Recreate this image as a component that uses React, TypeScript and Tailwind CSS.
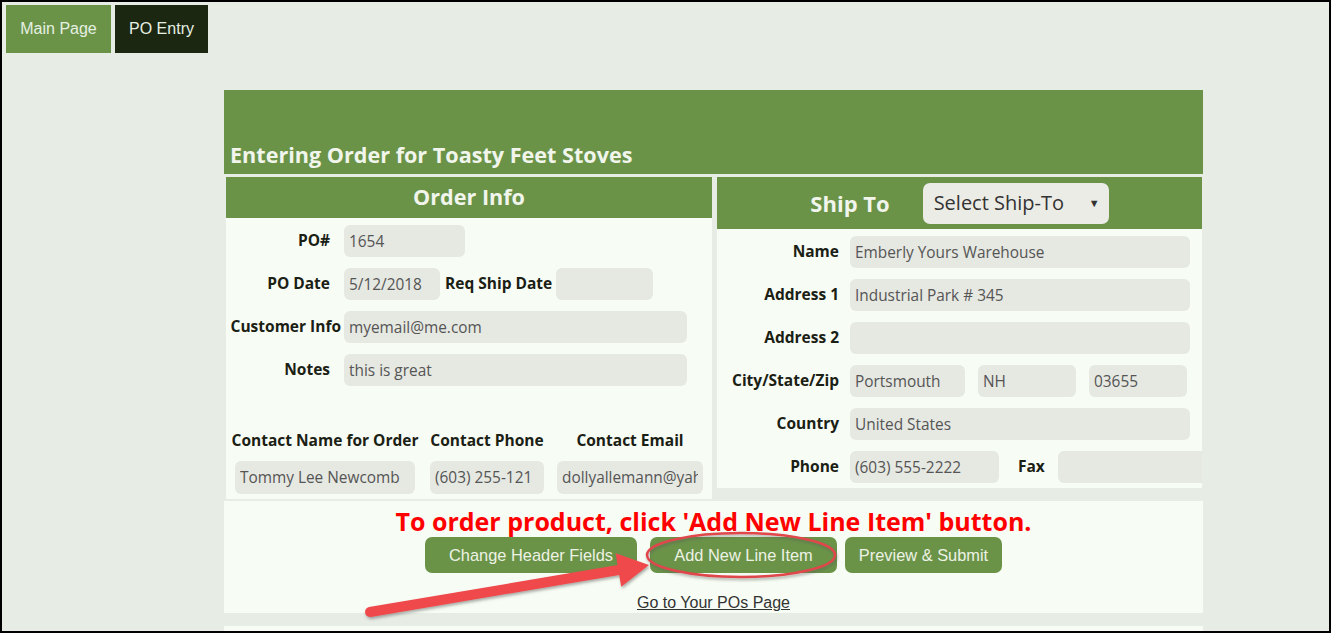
import React from 'react';

const green = 'bg-[#6a9348]';

function Field({ value, className }: { value: string; className?: string }) {
    return (
        <input
            readOnly
            value={value}
            className={`h-full rounded-[6px] bg-[#e6e8e2] px-[5px] text-[15.4px] text-[#555] outline-none ${className ?? ''}`}
        />
    );
}

function Row({ label, labelClass, children }: { label: string; labelClass?: string; children: React.ReactNode }) {
    return (
        <div className="flex h-[32px] items-center">
            <div className={`shrink-0 whitespace-nowrap text-right text-[15.5px] font-bold text-[#1b2014] ${labelClass ?? 'w-[118px] pr-[14px]'}`}>
                {label}
            </div>
            {children}
        </div>
    );
}

export default function App() {
    return (
        <div className="relative h-[633px] w-[1331px] overflow-hidden border-2 border-black bg-[#e7ece5] font-['Open_Sans',sans-serif]">
            {/* top tabs */}
            <div className="ml-[4px] mt-[3px] flex gap-[4px] font-['Liberation_Sans',Arial,sans-serif] text-[16px] text-[#e6f0e2]">
                <div className={`flex h-[48px] w-[105px] items-center justify-center ${green}`}>Main Page</div>
                <div className="flex h-[48px] w-[93px] items-center justify-center bg-[#1c2712]">PO Entry</div>
            </div>

            <div className="ml-[222px] mt-[37px] w-[979px]">
                <div className={`flex h-[84px] items-end px-[6px] pb-[3px] ${green}`}>
                    <h1 className="text-[21.6px] font-bold text-[#f1f5ec]">Entering Order for Toasty Feet Stoves</h1>
                </div>

                <div className="mt-[3px] flex items-start gap-[5px] pl-[2px] pr-[1px]">
                    {/* order info */}
                    <div className="w-[486px]">
                        <div className={`flex h-[41px] items-center justify-center text-[21.6px] font-bold text-[#f1f5ec] ${green}`}>
                            Order Info
                        </div>
                        <div className="h-[281px] bg-[#f7fdf4] pt-[7px]">
                            <div className="flex flex-col gap-[11px]">
                                <Row label="PO#"><Field value="1654" className="w-[121px]" /></Row>
                                <Row label="PO Date">
                                    <Field value="5/12/2018" className="w-[96px]" />
                                    <span className="ml-[5px] mr-[4px] whitespace-nowrap text-[15.5px] font-bold text-[#1b2014]">Req Ship Date</span>
                                    <Field value="" className="w-[97px]" />
                                </Row>
                                <Row label="Customer Info" labelClass="w-[118px] pr-[3px]"><Field value="myemail@me.com" className="w-[343px]" /></Row>
                                <Row label="Notes"><Field value="this is great" className="w-[343px]" /></Row>
                            </div>

                            <div className="mt-[44px] flex pl-[3px]">
                                {[
                                    { label: 'Contact Name for Order', value: 'Tommy Lee Newcomb', col: 'w-[192px]', input: 'w-[180px]' },
                                    { label: 'Contact Phone', value: '(603) 255-121', col: 'w-[132px]', input: 'w-[114px]' },
                                    { label: 'Contact Email', value: 'dollyallemann@yahoo.com', col: 'w-[154px]', input: 'w-[146px]' },
                                ].map(c => (
                                    <div key={c.label} className={`flex flex-col items-center ${c.col}`}>
                                        <div className="flex h-[22px] items-center whitespace-nowrap text-[15.5px] font-bold text-[#1b2014]">{c.label}</div>
                                        <div className="mt-[9px] h-[33px]">
                                            <Field value={c.value} className={c.input} />
                                        </div>
                                    </div>
                                ))}
                            </div>
                        </div>
                    </div>

                    {/* ship to */}
                    <div className="w-[485px] overflow-hidden">
                        <div className={`flex h-[52px] items-center justify-center gap-[33px] ${green}`}>
                            <span className="text-[22px] font-bold text-[#f1f5ec]">Ship To</span>
                            <div className="flex h-[41px] w-[186px] items-center justify-between rounded-[7px] bg-[#ecece6] pl-[11px] pr-[9px] text-[20px] text-[#333]">
                                <span>Select Ship-To</span>
                                <span className="text-[11px]">▼</span>
                            </div>
                        </div>
                        <div className="flex h-[259px] flex-col gap-[11px] bg-[#f7fdf4] pt-[7px]">
                            <Row label="Name" labelClass="w-[133px] pr-[11px]"><Field value="Emberly Yours Warehouse" className="w-[340px]" /></Row>
                            <Row label="Address 1" labelClass="w-[133px] pr-[11px]"><Field value="Industrial Park # 345" className="w-[340px]" /></Row>
                            <Row label="Address 2" labelClass="w-[133px] pr-[11px]"><Field value="" className="w-[340px]" /></Row>
                            <Row label="City/State/Zip" labelClass="w-[133px] pr-[11px]">
                                <Field value="Portsmouth" className="w-[115px]" />
                                <Field value="NH" className="ml-[13px] w-[98px]" />
                                <Field value="03655" className="ml-[13px] w-[98px]" />
                            </Row>
                            <Row label="Country" labelClass="w-[133px] pr-[11px]"><Field value="United States" className="w-[340px]" /></Row>
                            <Row label="Phone" labelClass="w-[133px] pr-[11px]">
                                <Field value="(603) 555-2222" className="w-[149px] shrink-0" />
                                <span className="ml-[19px] mr-[13px] text-[15.5px] font-bold text-[#1b2014]">Fax</span>
                                <Field value="" className="w-[160px] shrink-0" />
                            </Row>
                        </div>
                    </div>
                </div>

                {/* actions */}
                <div className="mt-[2px] flex h-[112px] flex-col items-center bg-[#f7fdf4] pt-[5px]">
                    <p className="text-[25px] font-bold leading-[30px] text-[#ff0000]">
                        To order product, click 'Add New Line Item' button.
                    </p>
                    <div className="mt-[1px] flex font-['Liberation_Sans',Arial,sans-serif] text-[16.4px] text-[#edf2e4]">
                        <button className={`h-[36px] w-[212px] rounded-[7px] ${green}`}>Change Header Fields</button>
                        <button className={`ml-[13px] h-[36px] w-[187px] rounded-[7px] ${green}`}>Add New Line Item</button>
                        <button className={`ml-[8px] h-[36px] w-[157px] rounded-[7px] ${green}`}>Preview &amp; Submit</button>
                    </div>
                    <a className="mt-[21px] font-['Liberation_Sans',Arial,sans-serif] text-[16px] leading-[18px] text-[#333] underline">
                        Go to Your POs Page
                    </a>
                </div>
                <div className="mt-[13px] h-[40px] bg-[#f7fdf4]" />
            </div>

            {/* callout annotation */}
            <svg className="pointer-events-none absolute left-[-2px] top-[-2px]" width="1331" height="633" viewBox="0 0 1331 633">
                <defs>
                    <filter id="sh" x="-10%" y="-50%" width="120%" height="200%">
                        <feDropShadow dx="1" dy="2" stdDeviation="1.5" floodColor="#555" floodOpacity="0.5" />
                    </filter>
                </defs>
                <ellipse cx="741" cy="555" rx="94" ry="22" fill="none" stroke="#e0464b" strokeWidth="2.5" filter="url(#sh)" />
                <g filter="url(#sh)" fill="#ef4a4c">
                    <polygon points="369,607 617.6,565.1 615.6,553.2 649,565 621.2,586.8 619.2,574.9 371,617" />
                    <circle cx="370" cy="612" r="5" />
                </g>
            </svg>
        </div>
    );
}
